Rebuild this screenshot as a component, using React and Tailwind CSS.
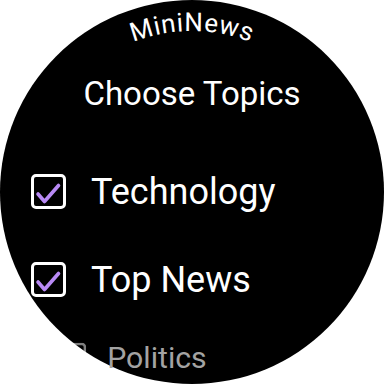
import React from "react";

function Check({ dim }) {
  return (
    <svg width="35" height="35" viewBox="0 0 35 35" className="shrink-0">
      <rect x="1.5" y="1.5" width="32" height="32" rx="3.5" fill="none" stroke={dim ? "rgba(255,255,255,0.5)" : "#ffffff"} strokeWidth="3" />
      <polyline points="7,20 13.5,27.5 27.5,11.5" fill="none" stroke={dim ? "rgba(255,255,255,0.45)" : "#B98AF5"} strokeWidth="3.6" strokeLinecap="round" strokeLinejoin="round" />
    </svg>
  );
}

function Row({ label, dim }) {
  return (
    <div className={"flex items-center h-[35px] pl-[31px] gap-[25px] " + (dim ? "scale-[0.84]" : "")}>
      <Check dim={dim} />
      <span className={"text-[36px] leading-none whitespace-nowrap " + (dim ? "text-[#a3a3a3]" : "text-white")}>{label}</span>
    </div>
  );
}

export default function App() {
  return (
    <div className="w-[384px] h-[384px] bg-white overflow-hidden" style={{ fontFamily: "Roboto, 'Noto Sans', sans-serif" }}>
      <div className="relative w-[384px] h-[384px] rounded-full bg-black flex flex-col">
        <svg className="absolute inset-0" width="384" height="384" viewBox="0 0 384 384">
          <defs>
            <path id="arc" d="M 30 193 A 162 162 0 0 1 354 193" />
          </defs>
          <text fill="#ffffff" fontSize="26" fontFamily="Roboto, sans-serif" letterSpacing="0.7">
            <textPath href="#arc" startOffset="50%" textAnchor="middle">MiniNews</textPath>
          </text>
        </svg>
        <div className="pt-[77px] text-center text-white text-[33px] leading-none">Choose Topics</div>
        <div className="mt-[64px] flex flex-col gap-[53px]">
          <Row label="Technology" />
          <Row label="Top News" />
        </div>
        <div className="mt-[43px]">
          <Row label="Politics" dim />
        </div>
      </div>
    </div>
  );
}
